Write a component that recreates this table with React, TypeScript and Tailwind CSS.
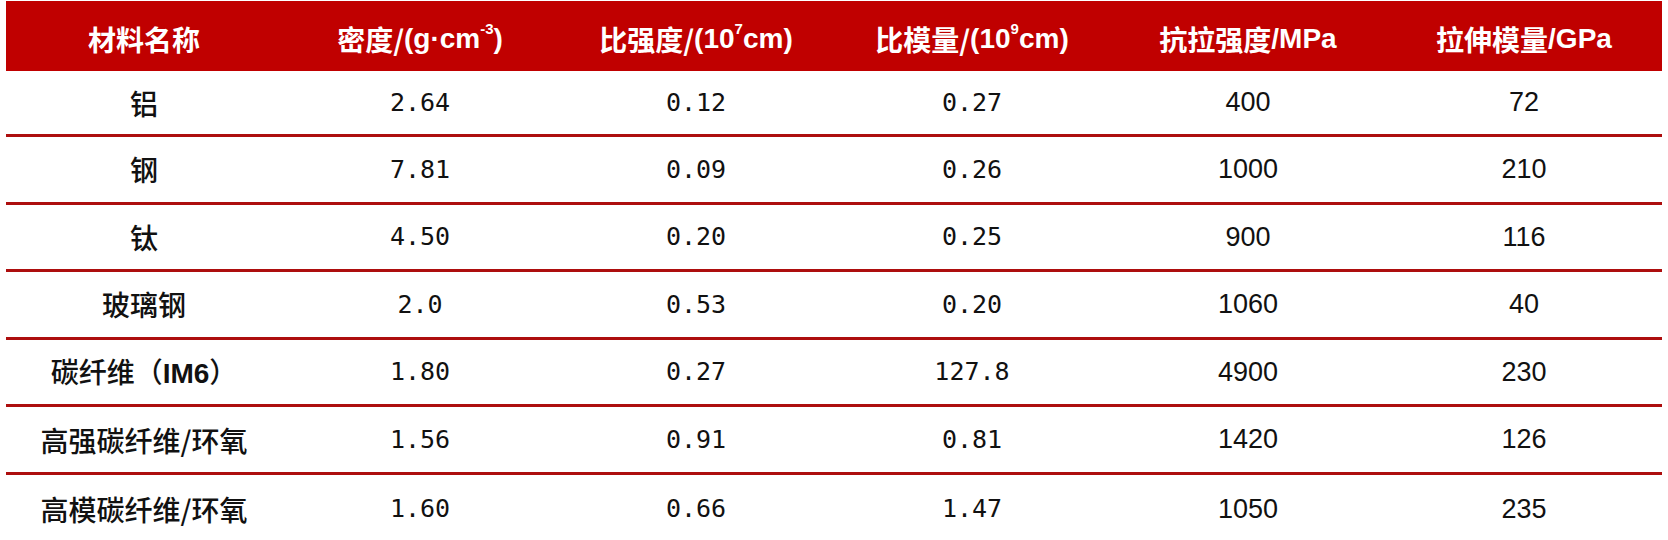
import React from 'react';

const cjk = "font-['Noto_Sans_CJK_SC',sans-serif]";
const latin = "font-['Liberation_Sans',Arial,sans-serif]";
const mono = "font-['DejaVu_Sans_Mono',monospace]";

type Row = [string, string, string, string, string, string];

const rows: Row[] = [
  ['铝', '2.64', '0.12', '0.27', '400', '72'],
  ['钢', '7.81', '0.09', '0.26', '1000', '210'],
  ['钛', '4.50', '0.20', '0.25', '900', '116'],
  ['玻璃钢', '2.0', '0.53', '0.20', '1060', '40'],
  ['碳纤维（IM6）', '1.80', '0.27', '127.8', '4900', '230'],
  ['高强碳纤维/环氧', '1.56', '0.91', '0.81', '1420', '126'],
  ['高模碳纤维/环氧', '1.60', '0.66', '1.47', '1050', '235'],
];

function HeaderCell({ children }: { children: React.ReactNode }) {
  return (
    <div className={`flex items-center justify-center pt-[6px] text-[28px] font-bold text-white ${cjk}`}>
      {children}
    </div>
  );
}

function Lat({ children }: { children: React.ReactNode }) {
  return <span className={`${latin} font-bold`}>{children}</span>;
}

function Sup({ children }: { children: React.ReactNode }) {
  return <span className={`${latin} relative top-[-10px] text-[15px] font-bold`}>{children}</span>;
}

function NameCell({ name }: { name: string }) {
  if (name.includes('IM6')) {
    return (
      <span>
        碳纤维（<span className={`${latin} font-bold`}>IM6</span>）
      </span>
    );
  }
  return <span>{name}</span>;
}

export default function App() {
  return (
    <div className="min-h-[540px] bg-white pt-px">
      <div className="ml-[6px] w-[1656px]">
        <div className="grid h-[70px] grid-cols-6 bg-[#c00000]">
          <HeaderCell>材料名称</HeaderCell>
          <HeaderCell>
            密度/<Lat>(g·cm</Lat>
            <Sup>-3</Sup>
            <Lat>)</Lat>
          </HeaderCell>
          <HeaderCell>
            比强度/<Lat>(10</Lat>
            <Sup>7</Sup>
            <Lat>cm)</Lat>
          </HeaderCell>
          <HeaderCell>
            比模量/<Lat>(10</Lat>
            <Sup>9</Sup>
            <Lat>cm)</Lat>
          </HeaderCell>
          <HeaderCell>
            抗拉强度<Lat>/MPa</Lat>
          </HeaderCell>
          <HeaderCell>
            拉伸模量<Lat>/GPa</Lat>
          </HeaderCell>
        </div>

        {rows.map((r, i) => (
          <div
            key={r[0]}
            className={`grid grid-cols-6 items-center text-[#111] ${
              i === 0 ? 'h-[66px]' : 'h-[67.6px]'
            } ${i < rows.length - 1 ? 'border-b-[3px] border-[#ad0e0e]' : ''}`}
          >
            <div className={`text-center text-[28px] font-medium ${cjk}`}>
              <NameCell name={r[0]} />
            </div>
            {r.slice(1, 4).map((v, j) => (
              <div key={j} className={`text-center text-[25px] ${mono}`}>
                {v}
              </div>
            ))}
            {r.slice(4).map((v, j) => (
              <div key={j} className={`text-center text-[27px] ${latin}`}>
                {v}
              </div>
            ))}
          </div>
        ))}
      </div>
    </div>
  );
}
